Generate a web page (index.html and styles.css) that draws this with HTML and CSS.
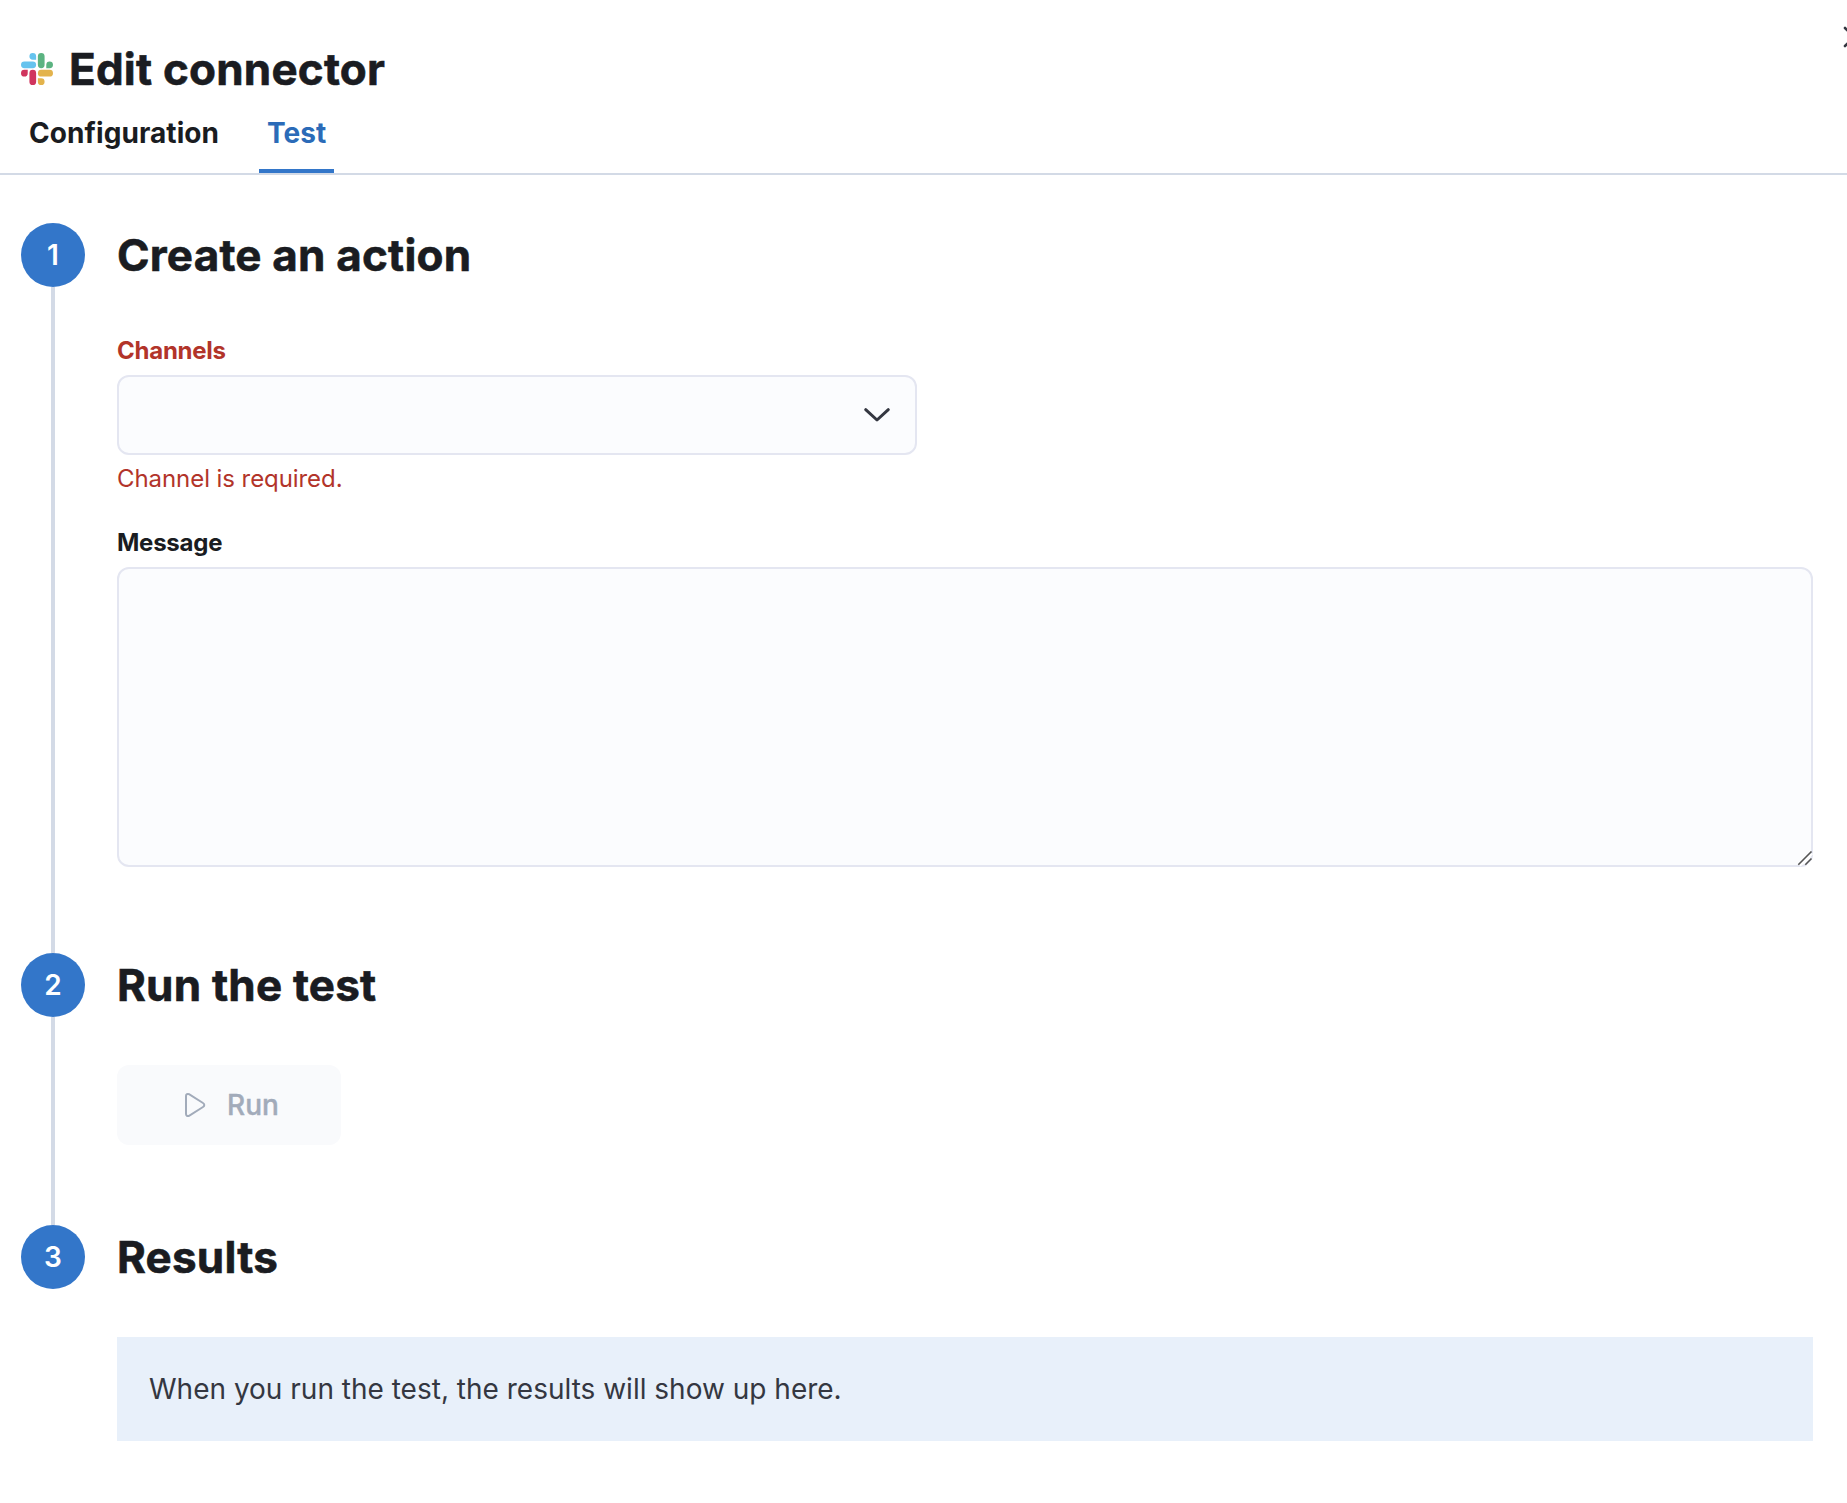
FILE: index.html
```html
<!DOCTYPE html>
<html lang="en">
<head>
<meta charset="utf-8">
<title>Edit connector</title>
<link rel="stylesheet" href="styles.css">
</head>
<body>
<div class="flyout">
  <button class="close" aria-label="Close">
    <svg width="22" height="22" viewBox="0 0 22 22"><path d="M2 2l18 18M20 2L2 20"/></svg>
  </button>
  <header class="header">
    <div class="title-row">
      <svg class="logo" width="32" height="32" viewBox="0 0 24 24">
        <path fill="#d0355e" d="M5.042 15.165a2.528 2.528 0 0 1-2.52 2.523A2.528 2.528 0 0 1 0 15.165a2.527 2.527 0 0 1 2.522-2.52h2.52v2.52zM6.313 15.165a2.527 2.527 0 0 1 2.521-2.52 2.527 2.527 0 0 1 2.521 2.52v6.313A2.528 2.528 0 0 1 8.834 24a2.528 2.528 0 0 1-2.521-2.522v-6.313z"/>
        <path fill="#65c3ee" d="M8.834 5.042a2.528 2.528 0 0 1-2.521-2.52A2.528 2.528 0 0 1 8.834 0a2.528 2.528 0 0 1 2.521 2.522v2.52H8.834zM8.834 6.313a2.528 2.528 0 0 1 2.521 2.521 2.528 2.528 0 0 1-2.521 2.521H2.522A2.528 2.528 0 0 1 0 8.834a2.528 2.528 0 0 1 2.522-2.521h6.312z"/>
        <path fill="#5bb381" d="M18.956 8.834a2.528 2.528 0 0 1 2.522-2.521A2.528 2.528 0 0 1 24 8.834a2.528 2.528 0 0 1-2.522 2.521h-2.522V8.834zM17.688 8.834a2.528 2.528 0 0 1-2.523 2.521 2.527 2.527 0 0 1-2.52-2.521V2.522A2.527 2.527 0 0 1 15.165 0a2.528 2.528 0 0 1 2.523 2.522v6.312z"/>
        <path fill="#e3b34c" d="M15.165 18.956a2.528 2.528 0 0 1 2.523 2.522A2.528 2.528 0 0 1 15.165 24a2.527 2.527 0 0 1-2.52-2.522v-2.522h2.52zM15.165 17.688a2.527 2.527 0 0 1-2.52-2.523 2.526 2.526 0 0 1 2.52-2.520h6.313A2.527 2.527 0 0 1 24 15.165a2.528 2.528 0 0 1-2.522 2.523h-6.313z"/>
      </svg>
      <h1 class="heading">Edit connector</h1>
    </div>
    <nav class="tabs">
      <a class="tab">Configuration</a>
      <a class="tab tab-selected">Test</a>
    </nav>
  </header>
  <main class="steps">
    <section class="step step-create">
      <div class="rail"><span class="number">1</span></div>
      <div class="body">
        <h2 class="heading step-title">Create an action</h2>
        <div class="label label-invalid">Channels</div>
        <div class="combo">
          <svg width="28" height="16" viewBox="0 0 28 16"><path d="M2.700 2.700L14 13L25.300 2.700"/></svg>
        </div>
        <div class="error">Channel is required.</div>
        <div class="label">Message</div>
        <div class="textarea">
          <svg class="grip" width="16" height="16" viewBox="0 0 16 16"><path class="grip-light" d="M3 15L15.500 2.500M10 15L15.500 9.500"/><path d="M1.300 13.700L14.500 .500M8.300 13.700L14.500 7.500"/></svg>
        </div>
      </div>
    </section>
    <section class="step step-run">
      <div class="rail"><span class="number">2</span></div>
      <div class="body">
        <h2 class="heading step-title">Run the test</h2>
        <button class="run" disabled>
          <svg width="22" height="26" viewBox="0 0 22 26"><path d="M2 4v18c0 1.700 1.500 2.600 3 1.800l14-8.800c1.700-1 1.700-3 0-4L5 2.200C3.500 1.400 2 2.300 2 4z"/></svg>
          <span>Run</span>
        </button>
      </div>
    </section>
    <section class="step">
      <div class="rail"><span class="number">3</span></div>
      <div class="body">
        <h2 class="heading step-title">Results</h2>
        <div class="callout">When you run the test, the results will show up here.</div>
      </div>
    </section>
  </main>
</div>
</body>
</html>
```
FILE: styles.css
```css
* { box-sizing: border-box; }
body {
  margin: 0;
  background: #fff;
  color: #343741;
  font-family: Inter, "Liberation Sans", sans-serif;
  font-size: 28px;
}
h1, h2 { margin: 0; }
svg { display: block; flex: none; }
.flyout {
  position: relative;
  width: 100%;
  height: 1503px;
  overflow: hidden;
}
.close {
  position: absolute;
  top: 26px;
  right: -17.5px;
  padding: 0;
  border: 0;
  background: none;
}
.close path { fill: none; stroke: #343741; stroke-width: 2.6; stroke-linecap: round; }
.header {
  padding-top: 43px;
  border-bottom: 2px solid #d3dae6;
}
.title-row {
  display: flex;
  align-items: center;
  gap: 16px;
  height: 52px;
  padding-left: 21px;
}
.heading {
  color: #1a1c21;
  font-size: 44px;
  font-weight: 700;
  line-height: 52px;
  letter-spacing: 0.2px;
  -webkit-text-stroke: 0.6px #1a1c21;
  white-space: nowrap;
}
.tabs {
  display: flex;
  gap: 32px;
  height: 78px;
  padding-left: 21px;
}
.tab {
  padding: 14px 8px 0;
  border-bottom: 4px solid transparent;
  color: #1a1c21;
  font-weight: 700;
  line-height: 48px;
  letter-spacing: 0.07px;
}
.tab-selected { color: #2b6bb8; border-bottom-color: #3376c9; }
.steps { padding: 48px 34px 0 21px; }
.step { display: flex; gap: 32px; }
.step-create { height: 730px; }
.step-run { height: 272px; }
.rail {
  display: flex;
  flex-direction: column;
  align-items: center;
  width: 64px;
}
.step:not(:last-child) .rail::after {
  content: "";
  flex: 1;
  width: 4px;
  background: #d3dae6;
}
.number {
  width: 64px;
  height: 64px;
  border-radius: 50%;
  background: #3376c9;
  color: #fff;
  font-weight: 600;
  line-height: 64px;
  text-align: center;
}
.body { flex: 1; }
.step-title { line-height: 64px; margin-bottom: 48px; }
.label {
  color: #1a1c21;
  font-size: 24px;
  font-weight: 700;
  line-height: 36px;
  letter-spacing: -0.25px;
}
.step-create .step-title { margin-bottom: 46px; }
.label-invalid, .error { color: #b2342a; }
.combo {
  display: flex;
  align-items: center;
  justify-content: flex-end;
  width: 800px;
  height: 80px;
  margin-top: 6px;
  padding-right: 24px;
  border: 2px solid #e4e6f1;
  border-radius: 12px;
  background: #fbfcfe;
}
.combo path { fill: none; stroke: #343741; stroke-width: 3; stroke-linecap: round; stroke-linejoin: round; }
.error { margin: 6px 0 28px; font-size: 24px; line-height: 36px; letter-spacing: -0.07px; }
.textarea {
  position: relative;
  height: 300px;
  margin-top: 6px;
  border: 2px solid #e4e6f1;
  border-radius: 12px;
  background: #fbfcfe;
}
.grip { position: absolute; right: -2px; bottom: -2px; }
.grip path { fill: none; stroke: #555; stroke-width: 1.6; }
.grip .grip-light { stroke: #fff; }
.run {
  display: flex;
  align-items: center;
  width: 224px;
  height: 80px;
  padding: 0 0 0 67px;
  gap: 21px;
  border: 0;
  border-radius: 12px;
  background: #f9fafc;
  color: #a2abba;
  font: 500 28px/48px Inter, "Liberation Sans", sans-serif;
  -webkit-text-stroke: 0.4px #a2abba;
}
.run path { fill: none; stroke: #a2abba; stroke-width: 2; }
.callout {
  height: 104px;
  padding: 0 32px;
  background: #e8f0fa;
  line-height: 104px;
}
```
